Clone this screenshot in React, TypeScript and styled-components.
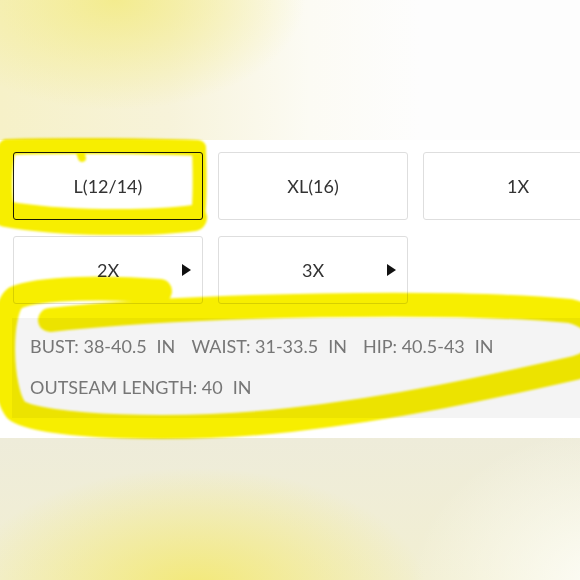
import styled, { createGlobalStyle } from 'styled-components'

const GlobalStyle = createGlobalStyle`
  html, body {
    margin: 0;
    padding: 0;
    background: #fff;
  }
  body {
    font-family: Lato, 'Noto Sans', 'Liberation Sans', sans-serif;
  }
`

const Page = styled.div`
  position: relative;
  width: 580px;
  height: 580px;
  overflow: hidden;
  display: flex;
  flex-direction: column;
`

const TopGlow = styled.div`
  flex: none;
  height: 140px;
  background:
    radial-gradient(ellipse 190px 110px at 115px 0px, rgba(243, 235, 135, 0.9), rgba(243, 235, 135, 0) 100%),
    linear-gradient(90deg, #f6f1c8 0px, #f7f3da 170px, #fcfbf4 310px, #fdfdfd 420px);
`

const BottomGlow = styled.div`
  flex: none;
  height: 142px;
  background:
    radial-gradient(ellipse 230px 120px at 195px 150px, rgba(243, 232, 110, 0.9), rgba(243, 232, 110, 0) 100%),
    radial-gradient(ellipse 200px 160px at 610px 150px, rgba(253, 253, 248, 1), rgba(253, 253, 248, 0) 100%),
    linear-gradient(180deg, #eeecda 0px, #f2efd2 100%);
`

const Panel = styled.section`
  flex: none;
  box-sizing: border-box;
  height: 298px;
  padding: 12px 0 0 13px;
  background: #fff;
  overflow: hidden;
`

const SizeGrid = styled.div`
  display: grid;
  grid-template-columns: repeat(3, 190px);
  grid-auto-rows: 68px;
  column-gap: 15px;
  row-gap: 16px;
`

const SizeButton = styled.button<{ $selected?: boolean }>`
  box-sizing: border-box;
  display: grid;
  grid-template-columns: 1fr auto 1fr;
  align-items: center;
  padding: 0 11px;
  background: #fff;
  border: ${(p) => (p.$selected ? '1.5px solid #1c1c1c' : '1.5px solid #dedede')};
  border-radius: 3px;
  font-family: Lato, 'Noto Sans', 'Liberation Sans', sans-serif;
  font-size: 18px;
  color: #333;
`

const Label = styled.span`
  grid-column: 2;
`

const Caret = styled.span`
  grid-column: 3;
  justify-self: end;
  width: 0;
  height: 0;
  border-left: 9px solid #111;
  border-top: 6.5px solid transparent;
  border-bottom: 6.5px solid transparent;
`

const InfoBox = styled.div`
  box-sizing: border-box;
  height: 100px;
  margin: 14px 0 0 -1px;
  padding: 8px 0 10px 18px;
  display: flex;
  flex-wrap: wrap;
  column-gap: 16px;
  background: #f4f4f4;
  font-size: 18px;
  line-height: 41px;
  color: #767676;
  white-space: nowrap;
`

const Measure = styled.span``

const Unit = styled.span`
  margin-left: 10px;
`

const Marker = styled.svg`
  position: absolute;
  inset: 0;
  pointer-events: none;
  mix-blend-mode: multiply;
`

const sizes = [
  { label: 'L(12/14)', selected: true },
  { label: 'XL(16)' },
  { label: '1X' },
  { label: '2X', more: true },
  { label: '3X', more: true },
]

const measures = [
  ['BUST', '38-40.5'],
  ['WAIST', '31-33.5'],
  ['HIP', '40.5-43'],
  ['OUTSEAM LENGTH', '40'],
]

export default function App() {
  return (
    <Page>
      <GlobalStyle />
      <TopGlow />
      <Panel>
        <SizeGrid>
          {sizes.map((s) => (
            <SizeButton key={s.label} $selected={s.selected}>
              <Label>{s.label}</Label>
              {s.more && <Caret />}
            </SizeButton>
          ))}
        </SizeGrid>
        <InfoBox>
          {measures.map(([name, value]) => (
            <Measure key={name}>
              {name}: {value}
              <Unit>IN</Unit>
            </Measure>
          ))}
        </InfoBox>
      </Panel>
      <BottomGlow />

      <Marker width="580" height="580" viewBox="0 0 580 580">
        <defs>
          <filter id="soft" x="-5%" y="-5%" width="110%" height="110%">
            <feGaussianBlur stdDeviation="0.8" />
          </filter>
        </defs>
        <g fill="none" stroke="#f7ee00" strokeLinecap="round" strokeLinejoin="round" filter="url(#soft)">
          <path d="M 8 147 C 60 145, 150 146, 198 148" strokeWidth="16" />
          <path d="M 199 148 C 200 175, 200 200, 198 218" strokeWidth="14" />
          <path d="M 194 218 C 150 224, 60 224, 6 214" strokeWidth="26" />
          <path d="M 7 148 C 2 170, 2 195, 6 214" strokeWidth="18" />
          <path d="M 80 152 L 82 158" strokeWidth="8" />
          <path
            d="M 160 291 C 110 287, 40 287, 15 298 C -2 312, 0 390, 16 410 C 40 428, 180 432, 290 420 C 400 408, 500 385, 575 368 C 610 360, 610 320, 570 311 C 450 300, 200 304, 50 320"
            strokeWidth="24"
          />
        </g>
      </Marker>
    </Page>
  )
}
